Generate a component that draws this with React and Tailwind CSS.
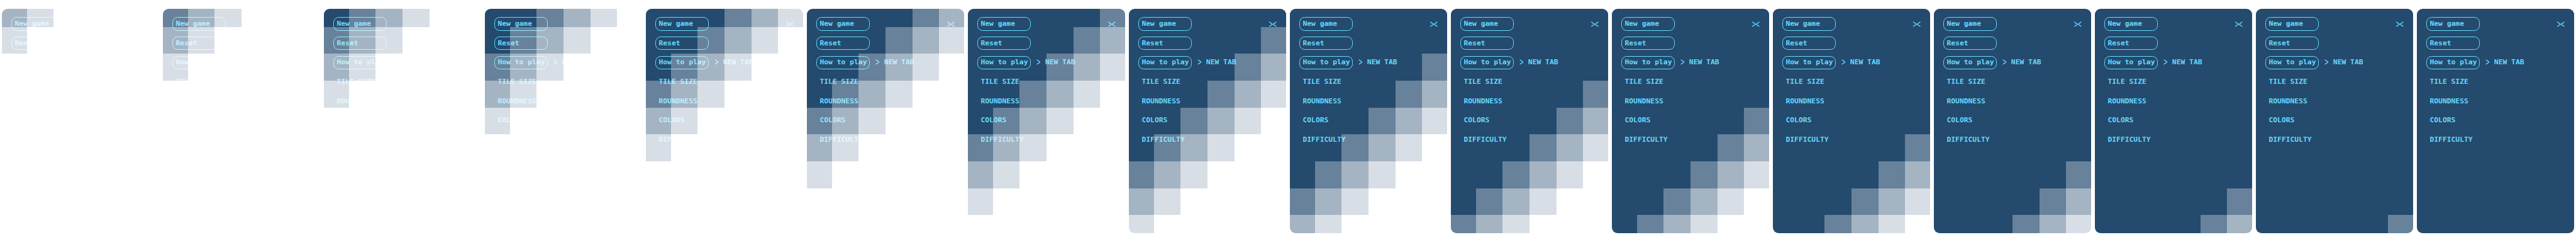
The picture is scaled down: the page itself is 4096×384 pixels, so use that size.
const FRAMES = Array.from({ length: 16 }, (_, i) => i);
const CELLS = Array.from({ length: 54 }, (_, i) => (i % 6) + Math.floor(i / 6));

function veil(distance) {
  if (distance <= -2) return "bg-transparent";
  if (distance === -1) return "bg-white/31";
  if (distance === 0) return "bg-white/59";
  if (distance === 1) return "bg-white/82";
  return "bg-white";
}

function MenuButton({ children }) {
  return (
    <button className="h-[21.33px] w-[85.33px] rounded-[8.5px] border border-[#65d9ff] pl-[4.6px] pb-[1.2px] text-left whitespace-pre leading-[17px]">
      {children}
    </button>
  );
}

function MenuRow({ children }) {
  return <li className="flex h-[30.72px] items-start">{children}</li>;
}

function Section({ children }) {
  return (
    <MenuRow>
      <span className="pl-[5.6px] pt-[1.5px] leading-[17px]">{children}</span>
    </MenuRow>
  );
}

function Panel() {
  return (
    <section className="flex h-[356.7px] w-[250.9px] justify-between rounded-[9px] bg-[#244a6d] pt-[13.65px] pr-[14.4px] pl-[15.3px]">
      <ul className="whitespace-pre">
        <MenuRow><MenuButton>New game</MenuButton></MenuRow>
        <MenuRow><MenuButton>Reset</MenuButton></MenuRow>
        <MenuRow>
          <MenuButton>How to play</MenuButton>
          <span className="pl-[9px] pt-[1.5px] leading-[17px]">
            <span className="inline-block scale-x-90 scale-y-150 font-normal">&gt;</span> NEW TAB
          </span>
        </MenuRow>
        <Section>TILE SIZE</Section>
        <Section>ROUNDNESS</Section>
        <Section>COLORS</Section>
        <Section>DIFFICULTY</Section>
      </ul>
      <span className="pt-[2.4px] leading-[17px]">
        <span className="inline-block scale-x-90 scale-y-150 font-normal">&gt;&lt;</span>
      </span>
    </section>
  );
}

function Frame({ step }) {
  return (
    <div className="relative h-[384px] w-[256px] overflow-hidden pt-[13.65px] pl-[2.56px]">
      <Panel />
      <div className="absolute inset-0 grid grid-cols-6 grid-rows-9">
        {CELLS.map((d, i) => (
          <div key={i} className={veil(d - step)} />
        ))}
      </div>
    </div>
  );
}

export default function App() {
  return (
    <main className="flex h-[384px] w-[4096px] overflow-hidden bg-white font-['DejaVu_Sans_Mono',monospace] text-[11.34px] font-bold text-[#65d9ff]">
      {FRAMES.map((step) => (
        <Frame key={step} step={step} />
      ))}
    </main>
  );
}
